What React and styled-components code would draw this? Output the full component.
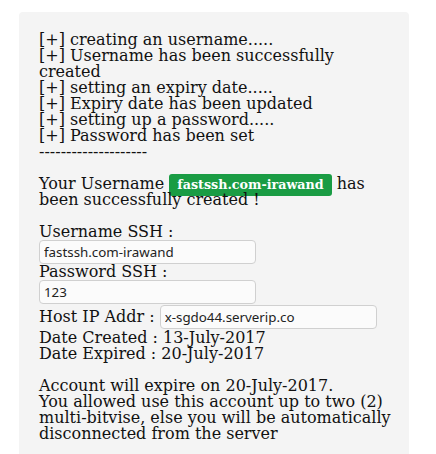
import React from "react";
import styled, { createGlobalStyle } from "styled-components";

const GlobalStyle = createGlobalStyle`
  html, body {
    margin: 0;
    padding: 0;
    background: #ffffff;
  }
  body {
    font-family: "DejaVu Serif", serif;
    color: #111111;
  }
`;

const Page = styled.div`
  padding: 12px 27px 0 19px;
  height: 454px;
  box-sizing: border-box;
  overflow: hidden;
`;

const Panel = styled.div`
  background: #f4f4f4;
  border-radius: 4px;
  padding: 20px 10px 40px 20px;
  min-height: 460px;
  box-sizing: border-box;
`;

const Text = styled.div`
  font-size: 16px;
  line-height: 16px;
  margin-bottom: ${(p) => (p.$gap ? "16px" : "0")};
`;

const Badge = styled.span`
  background: #1a9c44;
  color: #ffffff;
  font-weight: bold;
  font-size: 12.7px;
  line-height: 1;
  padding: 3px 8px 4px;
  border-radius: 3px;
`;

const Field = styled.input`
  display: block;
  flex-shrink: 0;
  box-sizing: border-box;
  width: 217px;
  height: 24px;
  margin: 0;
  padding: 0 4px;
  border: 1px solid #d0d0d0;
  border-radius: 4px;
  background: #fbfbfb;
  font-family: "Noto Sans", sans-serif;
  font-size: 13.333px;
  color: #222222;
  outline: none;
`;

const Row = styled.div`
  display: flex;
  align-items: center;
  height: 26px;
  font-size: 16px;
  line-height: 16px;
  white-space: nowrap;
  gap: 5px;
`;

const log = [
  "[+] creating an username.....",
  "[+] Username has been successfully created",
  "[+] setting an expiry date.....",
  "[+] Expiry date has been updated",
  "[+] setting up a password.....",
  "[+] Password has been set",
];

export default function App() {
  return (
    <>
      <GlobalStyle />
      <Page>
        <Panel>
          {log.map((line) => (
            <Text key={line}>{line}</Text>
          ))}
          <Text $gap>--------------------</Text>
          <Text $gap>
            Your Username <Badge>fastssh.com-irawand</Badge> has been
            successfully created !
          </Text>
          <Text>Username SSH :</Text>
          <Field readOnly value="fastssh.com-irawand" />
          <Text>Password SSH :</Text>
          <Field readOnly value="123" />
          <Row>
            <span>Host IP Addr :</span>
            <Field readOnly value="x-sgdo44.serverip.co" />
          </Row>
          <Text>Date Created : 13-July-2017</Text>
          <Text $gap>Date Expired : 20-July-2017</Text>
          <Text>Account will expire on 20-July-2017.</Text>
          <Text>
            You allowed use this account up to two (2) multi-bitvise, else you
            will be automatically disconnected from the server
          </Text>
        </Panel>
      </Page>
    </>
  );
}
